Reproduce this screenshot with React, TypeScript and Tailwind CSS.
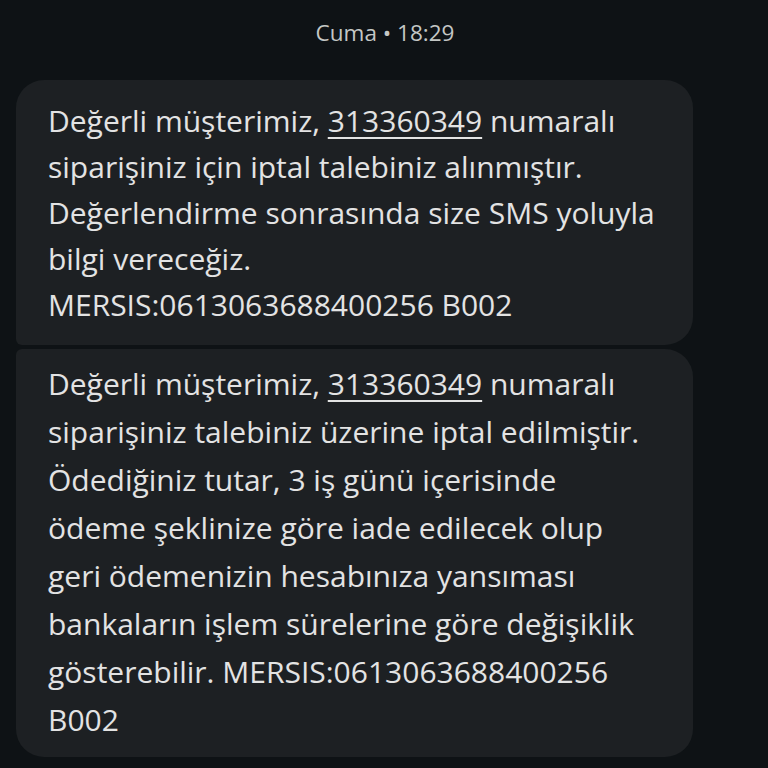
import React from "react";

const font = { fontFamily: "'Open Sans', Roboto, sans-serif" };

function Num() {
  return (
    <span className="underline decoration-2 underline-offset-[5px]">313360349</span>
  );
}

export default function App() {
  return (
    <div className="w-[768px] h-[768px] bg-[#0e1215] overflow-hidden text-[#e3e3e3]" style={font}>
      <div className="pt-[17px] pb-[31px] text-center text-[22.5px] leading-[32px] text-[#c4c7c5] pl-[2px]">
        Cuma • 18:29
      </div>

      <div className="flex flex-col gap-[4px] pl-[16px] w-[693px]">
        {/* first message */}
        <div className="bg-[#1d2023] rounded-[28px] rounded-bl-[6px] pl-[32px] pr-4 pt-[18px] pb-[17px] text-[30px] leading-[46px]">
          <div className="whitespace-nowrap">
            Değerli müşterimiz, <Num /> numaralı
          </div>
          <div className="whitespace-nowrap">siparişiniz için iptal talebiniz alınmıştır.</div>
          <div className="whitespace-nowrap">Değerlendirme sonrasında size SMS yoluyla</div>
          <div className="whitespace-nowrap">bilgi vereceğiz.</div>
          <div className="whitespace-nowrap">MERSIS:0613063688400256 B002</div>
        </div>

        {/* second message */}
        <div className="bg-[#1d2023] rounded-[28px] rounded-tl-[6px] pl-[32px] pr-4 pt-[11px] pb-[13px] text-[30px] leading-[48px]">
          <div className="whitespace-nowrap">
            Değerli müşterimiz, <Num /> numaralı
          </div>
          <div className="whitespace-nowrap">siparişiniz talebiniz üzerine iptal edilmiştir.</div>
          <div className="whitespace-nowrap">Ödediğiniz tutar, 3 iş günü içerisinde</div>
          <div className="whitespace-nowrap">ödeme şeklinize göre iade edilecek olup</div>
          <div className="whitespace-nowrap">geri ödemenizin hesabınıza yansıması</div>
          <div className="whitespace-nowrap">bankaların işlem sürelerine göre değişiklik</div>
          <div className="whitespace-nowrap">gösterebilir. MERSIS:0613063688400256</div>
          <div className="whitespace-nowrap">B002</div>
        </div>
      </div>
    </div>
  );
}
